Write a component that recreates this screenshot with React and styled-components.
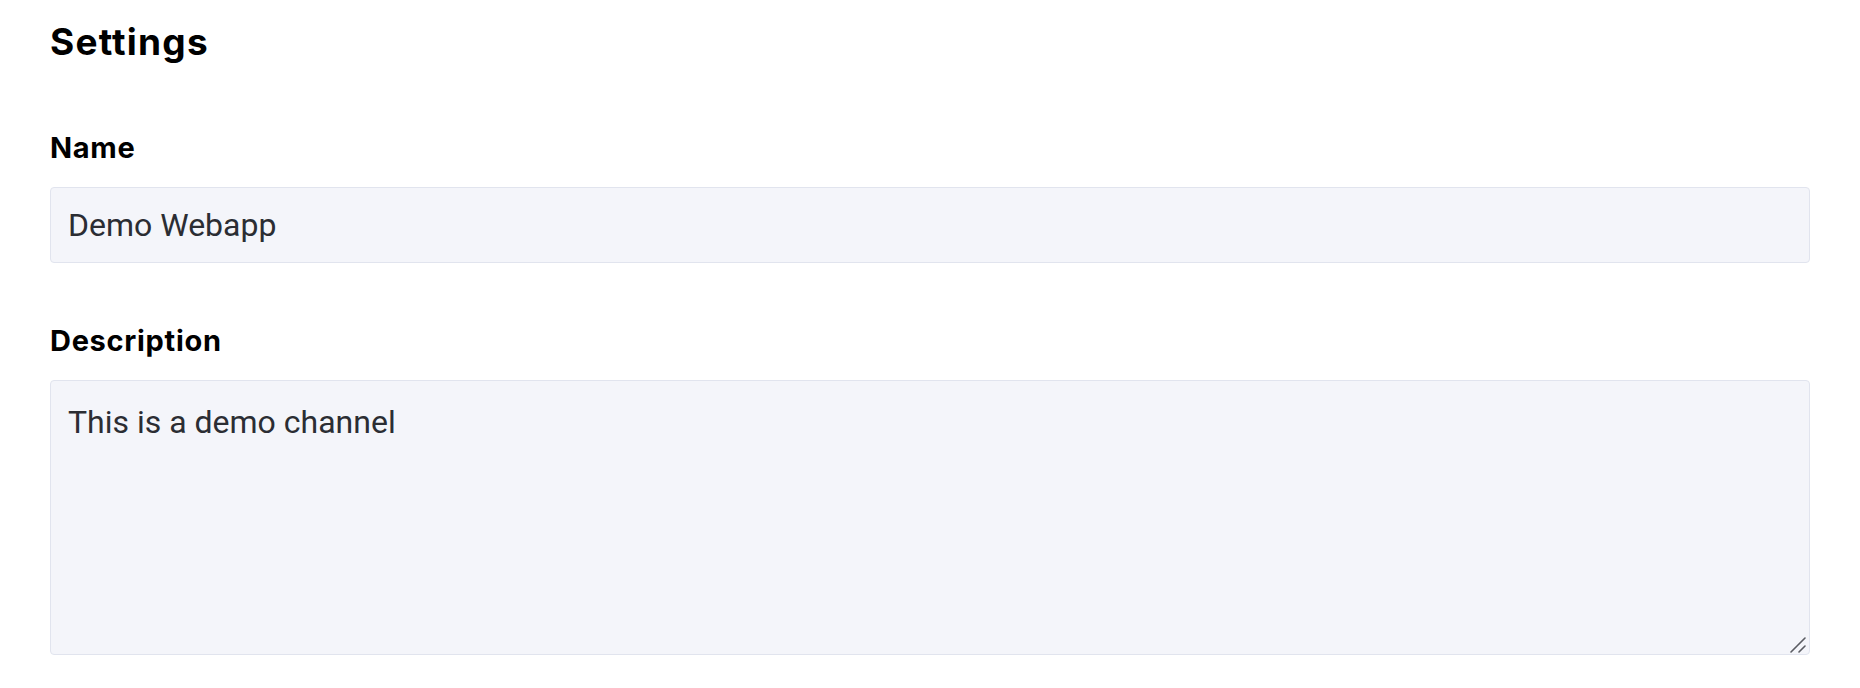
import React, { useState } from 'react';
import styled, { createGlobalStyle } from 'styled-components';

const GlobalStyle = createGlobalStyle`
  html, body {
    margin: 0;
    padding: 0;
    background: #ffffff;
  }
`;

const Page = styled.div`
  box-sizing: border-box;
  width: 1860px;
  padding: 16px 50px 0 50px;
`;

const Title = styled.h1`
  margin: 0 0 60px 0;
  font-family: 'Inter', 'Liberation Sans', sans-serif;
  font-size: 37px;
  font-weight: 700;
  line-height: 52px;
  color: #000000;
  letter-spacing: 1.2px;
`;

const Field = styled.div`
  display: flex;
  flex-direction: column;
  align-items: flex-start;
  margin-bottom: ${({ spacing }) => spacing || 0}px;
`;

const Label = styled.label`
  font-family: 'Inter', 'Liberation Sans', sans-serif;
  font-size: 29px;
  font-weight: 700;
  line-height: 40px;
  color: #000000;
  letter-spacing: 0.7px;
  margin-bottom: 19px;
`;

const inputBase = `
  box-sizing: border-box;
  width: 1760px;
  background: #f4f5fa;
  border: 1.5px solid #e1e4ee;
  border-radius: 4px;
  font-family: 'Roboto', 'Liberation Sans', sans-serif;
  font-size: 32px;
  color: #2b2d33;
  outline: none;
  margin: 0;
`;

const TextInput = styled.input`
  ${inputBase}
  height: 76px;
  padding: 0 17px;
`;

const AreaWrap = styled.div`
  position: relative;
  display: inline-block;
`;

const TextArea = styled.textarea`
  ${inputBase}
  height: 275px;
  padding: 17px;
  line-height: 1.5;
  resize: vertical;
  display: block;

  &::-webkit-resizer {
    background: transparent;
  }
`;

const Grip = styled.svg`
  position: absolute;
  right: 4px;
  bottom: 2px;
  width: 16px;
  height: 16px;
  pointer-events: none;
`;

export default function App() {
  const [name, setName] = useState('Demo Webapp');
  const [description, setDescription] = useState('This is a demo channel');

  return (
    <>
      <GlobalStyle />
      <Page>
        <Title>Settings</Title>
        <Field spacing={58}>
          <Label htmlFor="name">Name</Label>
          <TextInput id="name" value={name} onChange={(e) => setName(e.target.value)} />
        </Field>
        <Field>
          <Label htmlFor="description">Description</Label>
          <AreaWrap>
            <TextArea
              id="description"
              value={description}
              onChange={(e) => setDescription(e.target.value)}
            />
            <Grip viewBox="0 0 16 16">
              <path d="M1 15 L15 1 M9 15 L15 9" stroke="#5a5c63" strokeWidth="1.6" strokeLinecap="round" fill="none" />
            </Grip>
          </AreaWrap>
        </Field>
      </Page>
    </>
  );
}
